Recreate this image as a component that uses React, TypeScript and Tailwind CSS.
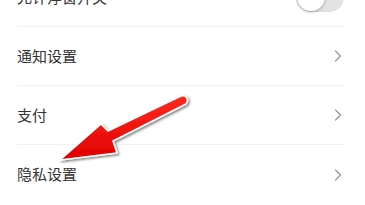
import { ChevronRight } from "lucide-react";

const rows = [
  { label: "通知设置" },
  { label: "支付" },
  { label: "隐私设置" },
];

function Toggle() {
  return (
    <div className="relative w-[48px] h-[30px] rounded-full bg-[#e3e3e3] shadow-[inset_0_0_2px_rgba(0,0,0,0.08)]">
      <div className="absolute left-[1px] top-[1px] w-[28px] h-[28px] rounded-full bg-white shadow-[0_1px_3px_rgba(0,0,0,0.3)]" />
    </div>
  );
}

function Arrow() {
  return (
    <svg className="absolute left-0 top-0 pointer-events-none" width="365" height="205" viewBox="0 0 365 205">
      <defs>
        <filter id="sh" x="-20%" y="-20%" width="140%" height="140%">
          <feDropShadow dx="1.5" dy="1.5" stdDeviation="1" floodColor="#000" floodOpacity="0.5" />
        </filter>
        <linearGradient id="rd" x1="0" y1="0" x2="0" y2="1">
          <stop offset="0" stopColor="#ff2a1f" />
          <stop offset="1" stopColor="#e00000" />
        </linearGradient>
      </defs>
      <path
        d="M181 96 L108 131 L101 124 L60 160 L117 153 L113 141 L186 104 Q189 100 186 97 Q184 95 181 96 Z"
        fill="url(#rd)"
        stroke="#ffffff"
        strokeWidth="1.6"
        strokeLinejoin="round"
        filter="url(#sh)"
      />
    </svg>
  );
}

export default function App() {
  return (
    <div className="relative w-[365px] h-[205px] overflow-hidden bg-white font-['Noto_Sans_CJK_SC',sans-serif]">
      <div className="-mt-[32px] ml-[17px] mr-[21px] flex flex-col">
        {/* row cut off at the top */}
        <div className="h-[59px] flex items-center justify-between border-b border-[#f2f2f2]">
          <span className="text-[15px] text-[#333]">允许浮窗开关</span>
          <Toggle />
        </div>
        {rows.map((row, i) => (
          <div
            key={row.label}
            className={`h-[59px] flex items-center justify-between ${i < rows.length - 1 ? "border-b border-[#f2f2f2]" : ""}`}
          >
            <span className="text-[15px] text-[#333]">{row.label}</span>
            <ChevronRight className="w-[20px] h-[20px] text-[#999] -mr-[4px]" strokeWidth={1.5} />
          </div>
        ))}
      </div>
      <Arrow />
    </div>
  );
}
